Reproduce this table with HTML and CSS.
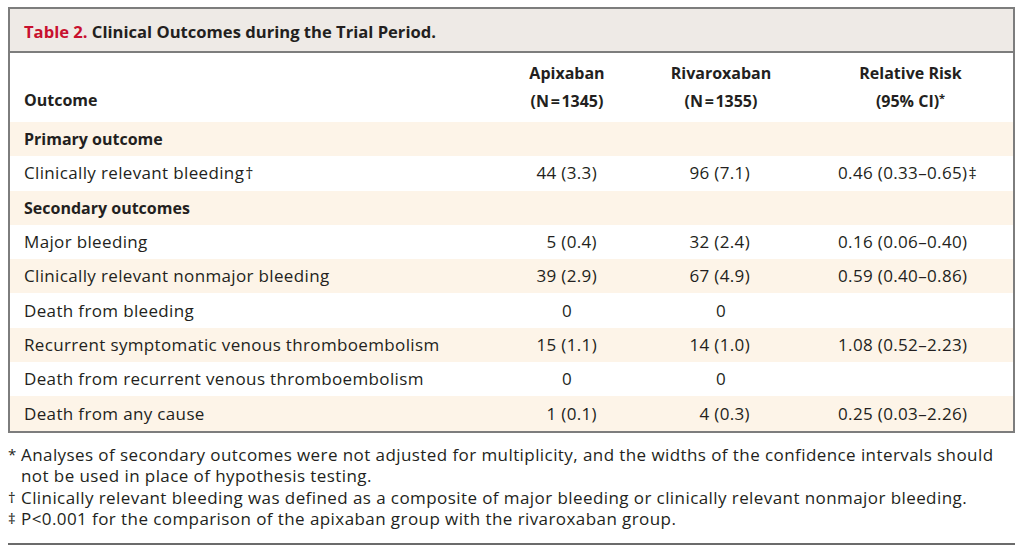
FILE: index.html
```html
<!DOCTYPE html>
<html lang="en">
<head>
<meta charset="utf-8">
<title>Table 2. Clinical Outcomes during the Trial Period.</title>
<link rel="stylesheet" href="styles.css">
</head>
<body>
<div class="page">
  <div class="box">
    <div class="title"><span class="num">Table 2.</span> Clinical Outcomes during the Trial Period.</div>
    <table class="data">
      <colgroup>
        <col class="c1"><col class="c2"><col class="c3"><col class="c4">
      </colgroup>
      <thead>
        <tr>
          <th class="lab">Outcome</th>
          <th class="hd">Apixaban<br>(N&#8202;=&#8202;1345)</th>
          <th class="hd">Rivaroxaban<br>(N&#8202;=&#8202;1355)</th>
          <th class="hd rr">Relative Risk<br>(95% CI)<sup class="ast">*</sup></th>
        </tr>
      </thead>
      <tbody>
        <tr class="sec"><td class="lab b">Primary outcome</td><td></td><td></td><td></td></tr>
        <tr><td class="lab">Clinically relevant bleeding<span class="sym">†</span></td><td class="va">44 (3.3)</td><td class="vb">96 (7.1)</td><td class="vr">0.46 (0.33–0.65)<span class="sym">‡</span></td></tr>
        <tr class="sec"><td class="lab b">Secondary outcomes</td><td></td><td></td><td></td></tr>
        <tr><td class="lab">Major bleeding</td><td class="va">5 (0.4)</td><td class="vb">32 (2.4)</td><td class="vr">0.16 (0.06–0.40)</td></tr>
        <tr class="sec"><td class="lab">Clinically relevant nonmajor bleeding</td><td class="va">39 (2.9)</td><td class="vb">67 (4.9)</td><td class="vr">0.59 (0.40–0.86)</td></tr>
        <tr><td class="lab">Death from bleeding</td><td class="z">0</td><td class="z">0</td><td></td></tr>
        <tr class="sec"><td class="lab">Recurrent symptomatic venous thromboembolism</td><td class="va">15 (1.1)</td><td class="vb">14 (1.0)</td><td class="vr">1.08 (0.52–2.23)</td></tr>
        <tr><td class="lab">Death from recurrent venous thromboembolism</td><td class="z">0</td><td class="z">0</td><td></td></tr>
        <tr class="sec"><td class="lab">Death from any cause</td><td class="va">1 (0.1)</td><td class="vb">4 (0.3)</td><td class="vr">0.25 (0.03–2.26)</td></tr>
      </tbody>
    </table>
  </div>
  <div class="notes">
    <p class="note"><span class="mark">*</span><span class="txt">Analyses of secondary outcomes were not adjusted for multiplicity, and the widths of the confidence intervals should not be used in place of hypothesis testing.</span></p>
    <p class="note"><span class="mark">†</span><span class="txt">Clinically relevant bleeding was defined as a composite of major bleeding or clinically relevant nonmajor bleeding.</span></p>
    <p class="note"><span class="mark">‡</span><span class="txt">P&lt;0.001 for the comparison of the apixaban group with the rivaroxaban group.</span></p>
  </div>
</div>
</body>
</html>
```
FILE: styles.css
```css
html, body {
  margin: 0;
  padding: 0;
  background: #ffffff;
}
body {
  font-family: "Open Sans", "Noto Sans", sans-serif;
  color: #231f20;
}
.page {
  padding: 7px 9px 0 8px;
}
.box {
  border: 2px solid #7d7d7d;
}
.title {
  background: #eeeae6;
  border-bottom: 2px solid #7d7d7d;
  padding: 11px 14px 8px;
  font-size: 16.6px;
  font-weight: 700;
  line-height: 23px;
}
.num {
  color: #c8102e;
}
.data {
  width: 100%;
  border-collapse: collapse;
  table-layout: fixed;
  font-size: 17px;
  letter-spacing: 0.35px;
}
.c1 { width: 480px; }
.c2 { width: 154px; }
.c3 { width: 154px; }
.data th {
  font-size: 16px;
  letter-spacing: 0;
  font-weight: 700;
  line-height: 28px;
  padding: 6px 0 7px;
  vertical-align: bottom;
  text-align: center;
}
.data th.lab {
  text-align: left;
  padding-left: 14px;
  padding-bottom: 8px;
}
.data th.rr {
  padding-left: 10px;
}
.ast {
  font-size: 11px;
  vertical-align: 5px;
  line-height: 0;
}
.data td {
  height: 34.3px;
  padding: 0;
  line-height: 20px;
  white-space: nowrap;
}
.data td.lab {
  padding-left: 14px;
}
.data td.b {
  font-size: 16px;
  letter-spacing: 0;
  font-weight: 700;
}
.sec td {
  background: #fdf4e8;
}
.va {
  text-align: right;
  padding-right: 47px !important;
}
.vb {
  text-align: right;
  padding-right: 48px !important;
}
.vr {
  padding-left: 40px !important;
}
.z {
  text-align: center;
}
.sym {
  font-size: 16px;
  letter-spacing: 0;
  margin-left: 1px;
}
.notes {
  margin-top: 11px;
  padding-bottom: 13px;
  border-bottom: 2px solid #6b6b6b;
  font-size: 17px;
  letter-spacing: 0.42px;
  line-height: 21.5px;
}
.note {
  display: flex;
  margin: 0;
}
.mark {
  flex: 0 0 13px;
  font-size: 15px;
  letter-spacing: 0;
}
.txt {
  flex: 1;
}
```
